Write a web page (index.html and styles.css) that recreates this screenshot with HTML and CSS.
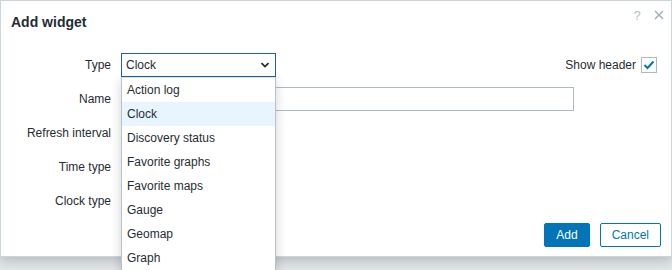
FILE: index.html
```html
<!DOCTYPE html>
<html>
	<head>
		<meta charset="utf-8">
		<title>Add widget</title>
		<link rel="stylesheet" href="styles.css">
	</head>
	<body>
		<div class="dialog">
			<div class="dialog-head">
				<h4>Add widget</h4>
				<div class="head-tools">
					<span class="btn-help">?</span>
					<span class="btn-close">
						<svg width="10" height="10" viewBox="0 0 10 10"><path d="M1 1L9 9M9 1L1 9" stroke="#9fadb4" stroke-width="1.4" fill="none"/></svg>
					</span>
				</div>
			</div>
			<div class="form">
				<label>Type</label>
				<div class="field field-split">
					<div class="select-wrap">
						<div class="select">
							<span>Clock</span>
							<svg width="10" height="6" viewBox="0 0 10 6"><path d="M1.5 1.2L5 4.6L8.5 1.2" stroke="#1f2c33" stroke-width="1.8" fill="none"/></svg>
						</div>
						<ul class="list">
							<li>Action log</li>
							<li class="hover">Clock</li>
							<li>Discovery status</li>
							<li>Favorite graphs</li>
							<li>Favorite maps</li>
							<li>Gauge</li>
							<li>Geomap</li>
							<li>Graph</li>
						</ul>
					</div>
					<div class="show-header">
						<span>Show header</span>
						<span class="checkbox">
							<svg width="12" height="10" viewBox="0 0 12 10"><path d="M1.5 5L4.5 8L10.5 1.5" stroke="#0275b8" stroke-width="2" fill="none"/></svg>
						</span>
					</div>
				</div>

				<label>Name</label>
				<div class="field"><div class="input"></div></div>

				<label>Refresh interval</label>
				<div class="field"></div>

				<label>Time type</label>
				<div class="field"></div>

				<label>Clock type</label>
				<div class="field"></div>
			</div>
			<div class="dialog-foot">
				<button class="btn-main">Add</button>
				<button class="btn-alt">Cancel</button>
			</div>
		</div>
	</body>
</html>
```

FILE: styles.css
```css
* { margin: 0; padding: 0; box-sizing: border-box; }
html, body { height: 100%; overflow: hidden; }
body { background: #e3e7e9; font-family: "Liberation Sans", Arial, sans-serif; font-size: 12px; color: #1f2c33; }

.dialog { width: 672px; background: #fff; border: 1px solid #ccd5d9; box-shadow: 0 3px 12px rgba(0,0,0,.22); }

.dialog-head { display: flex; align-items: flex-start; height: 52px; padding: 0 1px 0 10px; }
.dialog-head h4 { flex: 1; margin-top: 12px; font-size: 14px; line-height: 18px; font-weight: bold; color: #1f2c33; }
.head-tools { display: flex; margin-top: 4px; }
.head-tools span { width: 22px; height: 20px; display: flex; align-items: center; justify-content: center; }
.btn-help { color: #b3c0c6; font-size: 13px; }

.form { display: grid; grid-template-columns: 100px 1fr; grid-auto-rows: 24px; gap: 10px; padding: 0 10px; }
.form label { display: flex; align-items: center; justify-content: flex-end; white-space: nowrap; }
.field { display: flex; align-items: center; }
.field-split { justify-content: space-between; }

.select-wrap { position: relative; }
.select { width: 155px; height: 24px; border: 1px solid #1e6296; display: flex; align-items: center; justify-content: space-between; padding: 0 5px 0 4px; }
.list { position: absolute; top: 24px; left: 0; width: 155px; list-style: none; background: #fff; border: 1px solid #b7c3c9; border-top-color: #dde3e6; box-shadow: 0 4px 10px rgba(0,0,0,.18); z-index: 5; }
.list li { height: 24px; line-height: 24px; padding-left: 5px; white-space: nowrap; }
.list li.hover { background: #e8f5ff; }

.show-header { display: flex; align-items: center; gap: 5px; margin-right: 4px; }
.checkbox { width: 16px; height: 16px; border: 1px solid #acbbc2; display: flex; align-items: center; justify-content: center; }

.input { width: 453px; height: 24px; border: 1px solid #acbbc2; }

.dialog-foot { display: flex; justify-content: flex-end; gap: 10px; padding: 10px 10px 9px; }
.dialog-foot button { height: 24px; padding: 0 11px; font-family: inherit; font-size: 12px; border: 1px solid #0275b8; border-radius: 2px; }
.btn-main { background: #0275b8; color: #fff; }
.btn-alt { background: #fff; color: #0275b8; }
```
